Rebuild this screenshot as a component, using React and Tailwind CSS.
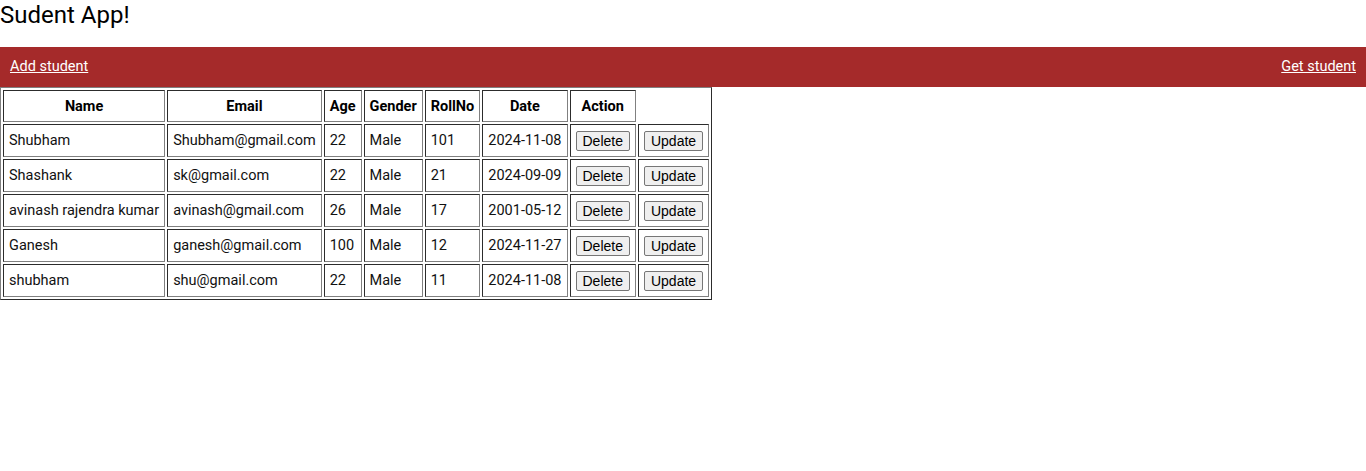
const students = [
  { name: "Shubham", email: "Shubham@gmail.com", age: 22, gender: "Male", roll: 101, date: "2024-11-08" },
  { name: "Shashank", email: "sk@gmail.com", age: 22, gender: "Male", roll: 21, date: "2024-09-09" },
  { name: "avinash rajendra kumar", email: "avinash@gmail.com", age: 26, gender: "Male", roll: 17, date: "2001-05-12" },
  { name: "Ganesh", email: "ganesh@gmail.com", age: 100, gender: "Male", roll: 12, date: "2024-11-27" },
  { name: "shubham", email: "shu@gmail.com", age: 22, gender: "Male", roll: 11, date: "2024-11-08" },
];

const HEADERS = ["Name", "Email", "Age", "Gender", "RollNo", "Date", "Action"];

const cell = "border border-[#808080] [border-style:inset] px-[5px] py-[5.5px] text-left font-normal";
const btn = "bg-[#efefef] border border-[#767676] rounded-[2px] px-[6px] py-[1px] text-[14px] leading-[16px] text-black font-['Liberation_Sans',Arial,sans-serif]";

export default function App() {
  return (
    <div className="min-h-[471px] bg-white text-black font-['Roboto',sans-serif]">
      <h1 className="text-[24px] leading-[30px] font-normal">Sudent App!</h1>

      {/* nav */}
      <nav className="mt-[17px] h-[40px] bg-[#a52a2a] flex items-center justify-between px-[10px] text-[14.5px]">
        <a href="#" className="text-white underline">Add student</a>
        <a href="#" className="text-white underline">Get student</a>
      </nav>

      <table className="border border-[#808080] [border-style:outset] border-separate border-spacing-[2px] text-[14.5px] leading-[17px] text-[#111]">
        <thead>
          <tr>
            {HEADERS.map((h) => (
              <th key={h} className={`${cell} !py-[6.5px] !text-center !font-bold text-black`}>{h}</th>
            ))}
          </tr>
        </thead>
        <tbody>
          {students.map((s) => (
            <tr key={s.email}>
              <td className={cell}>{s.name}</td>
              <td className={cell}>{s.email}</td>
              <td className={cell}>{s.age}</td>
              <td className={cell}>{s.gender}</td>
              <td className={cell}>{s.roll}</td>
              <td className={cell}>{s.date}</td>
              <td className={cell}><button className={btn}>Delete</button></td>
              <td className={cell}><button className={btn}>Update</button></td>
            </tr>
          ))}
        </tbody>
      </table>
    </div>
  );
}
